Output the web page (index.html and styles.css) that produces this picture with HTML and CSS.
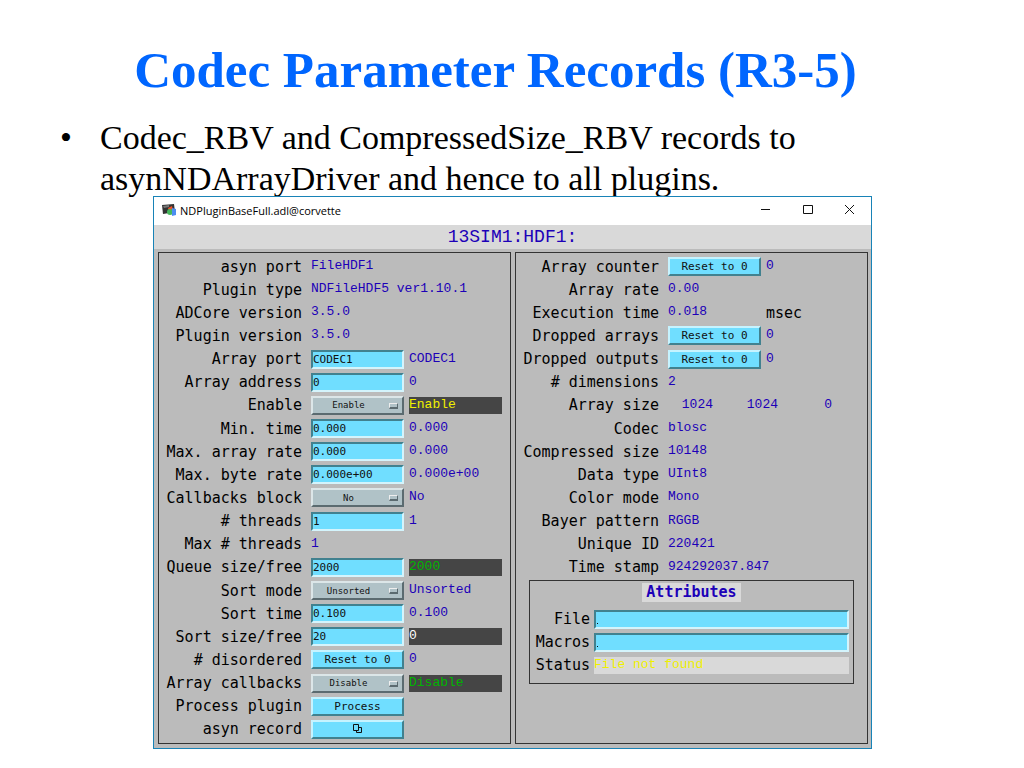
FILE: index.html
```html
<!DOCTYPE html>
<html lang="en">
<head>
  <meta charset="UTF-8">
  <title>Codec Parameter Records (R3-5)</title>
  <link rel="stylesheet" href="styles.css">
</head>
<body>

  <h1>Codec Parameter Records (R3-5)</h1>

  <ul class="points">
    <li>Codec_RBV and CompressedSize_RBV records to asynNDArrayDriver and hence to all plugins.</li>
  </ul>

  <main class="window">
    <header class="titlebar">
      <svg class="app-icon" width="14" height="12" viewBox="0 0 14 12">
        <path d="M0 1l12-1 1 8-12 2z" fill="#333"/>
        <path d="M1 2l6-1v2l-5 1z" fill="#777"/>
        <path d="M6 4l4-2 1 4-4 1z" fill="#e8502c"/>
        <circle cx="8" cy="8" r="3" fill="#45b85c"/>
        <path d="M10 4l4 1v6l-4 1z" fill="#4c8df0"/>
      </svg>
      <span class="window-name">NDPluginBaseFull.adl@corvette</span>
      <button class="win-btn" aria-label="Minimize">
        <svg width="11" height="11" viewBox="0 0 11 11"><path d="M0 4.5h9" stroke="#111"/></svg>
      </button>
      <button class="win-btn" aria-label="Maximize">
        <svg width="11" height="11" viewBox="0 0 11 11"><path d="M.5.5h9v8h-9z" stroke="#111" fill="none"/></svg>
      </button>
      <button class="win-btn" aria-label="Close">
        <svg width="11" height="11" viewBox="0 0 11 11"><path d="M0 0l9 9M9 0l-9 9" stroke="#111"/></svg>
      </button>
    </header>

    <h2 class="prefix">13SIM1:HDF1:</h2>

    <div class="panels">
      <!-- Plugin settings -->
      <section class="panel">
        <div class="row"><span class="label">asyn port</span><output class="wide">FileHDF1</output></div>
        <div class="row"><span class="label">Plugin type</span><output class="wide">NDFileHDF5 ver1.10.1</output></div>
        <div class="row"><span class="label">ADCore version</span><output class="wide">3.5.0</output></div>
        <div class="row"><span class="label">Plugin version</span><output class="wide">3.5.0</output></div>
        <div class="row"><label for="port">Array port</label><input id="port" type="text" value="CODEC1"><output>CODEC1</output></div>
        <div class="row"><label for="address">Array address</label><input id="address" type="text" value="0"><output>0</output></div>
        <div class="row">
          <label for="enable">Enable</label>
          <span class="option"><select id="enable"><option>Enable</option></select></span>
          <output class="dark yellow">Enable</output>
        </div>
        <div class="row"><label for="mintime">Min. time</label><input id="mintime" type="text" value="0.000"><output>0.000</output></div>
        <div class="row"><label for="arrayrate">Max. array rate</label><input id="arrayrate" type="text" value="0.000"><output>0.000</output></div>
        <div class="row"><label for="byterate">Max. byte rate</label><input id="byterate" type="text" value="0.000e+00"><output>0.000e+00</output></div>
        <div class="row">
          <label for="block">Callbacks block</label>
          <span class="option"><select id="block"><option>No</option></select></span>
          <output>No</output>
        </div>
        <div class="row"><label for="threads"># threads</label><input id="threads" type="text" value="1"><output>1</output></div>
        <div class="row"><span class="label">Max # threads</span><output class="wide">1</output></div>
        <div class="row"><label for="queue">Queue size/free</label><input id="queue" type="text" value="2000"><output class="dark green">2000</output></div>
        <div class="row">
          <label for="sortmode">Sort mode</label>
          <span class="option"><select id="sortmode"><option>Unsorted</option></select></span>
          <output>Unsorted</output>
        </div>
        <div class="row"><label for="sorttime">Sort time</label><input id="sorttime" type="text" value="0.100"><output>0.100</output></div>
        <div class="row"><label for="sortsize">Sort size/free</label><input id="sortsize" type="text" value="20"><output class="dark">0</output></div>
        <div class="row"><label for="disordered"># disordered</label><button id="disordered">Reset to 0</button><output>0</output></div>
        <div class="row">
          <label for="callbacks">Array callbacks</label>
          <span class="option"><select id="callbacks"><option>Disable</option></select></span>
          <output class="dark green">Disable</output>
        </div>
        <div class="row"><label for="process">Process plugin</label><button id="process">Process</button></div>
        <div class="row">
          <label for="record">asyn record</label>
          <button id="record">
            <svg width="10" height="10" viewBox="0 0 10 10" fill="none" stroke="#111"><path d="M.5.5h5v6h-5zM5.5 3.5h3v5h-5v-2"/></svg>
          </button>
        </div>
      </section>

      <!-- Array status -->
      <section class="panel">
        <div class="row"><label for="counter">Array counter</label><button id="counter">Reset to 0</button><output>0</output></div>
        <div class="row"><span class="label">Array rate</span><output>0.00</output></div>
        <div class="row"><span class="label">Execution time</span><output>0.018</output><span class="label unit">msec</span></div>
        <div class="row"><label for="droparrays">Dropped arrays</label><button id="droparrays">Reset to 0</button><output>0</output></div>
        <div class="row"><label for="dropoutputs">Dropped outputs</label><button id="dropoutputs">Reset to 0</button><output>0</output></div>
        <div class="row"><span class="label"># dimensions</span><output>2</output></div>
        <div class="row"><span class="label">Array size</span><output class="wide sizes"><span>1024</span><span>1024</span><span>0</span></output></div>
        <div class="row"><span class="label">Codec</span><output>blosc</output></div>
        <div class="row"><span class="label">Compressed size</span><output>10148</output></div>
        <div class="row"><span class="label">Data type</span><output>UInt8</output></div>
        <div class="row"><span class="label">Color mode</span><output>Mono</output></div>
        <div class="row"><span class="label">Bayer pattern</span><output>RGGB</output></div>
        <div class="row"><span class="label">Unique ID</span><output>220421</output></div>
        <div class="row"><span class="label">Time stamp</span><output class="wide">924292037.847</output></div>

        <div class="attributes">
          <h3>Attributes</h3>
          <div class="attr"><label for="file">File</label><input id="file" class="empty" type="text"></div>
          <div class="attr"><label for="macros">Macros</label><input id="macros" class="empty" type="text"></div>
          <div class="attr"><span class="label">Status</span><output class="status">File not found</output></div>
        </div>
      </section>
    </div>
  </main>

</body>
</html>
```
FILE: styles.css
```css
*,
*::after {
  box-sizing: border-box;
}

body {
  display: flex;
  flex-direction: column;
  min-height: 100vh;
  margin: 0;
  padding: 40px 0 19px;
  background: #fff;
  color: #000;
  font-family: "Liberation Serif", serif;
}

h1 {
  margin: 0;
  padding-right: 33px;
  color: #0066ff;
  font-size: 51px;
  line-height: 60px;
  text-align: center;
}

.points {
  margin: 17px 200px 0 60px;
  padding-left: 40px;
  list-style: none;
  font-size: 34px;
  line-height: 41px;
}

.points li::before {
  content: "•";
  float: left;
  margin-left: -40px;
}

/* Window */
.window {
  position: relative;
  display: flex;
  flex: 1;
  flex-direction: column;
  margin: -3px 152px 0 153px;
  border: 1px solid #1883b7;
  background: #bbb;
}

.titlebar {
  display: flex;
  align-items: center;
  height: 28px;
  padding: 0 8px 2px;
  background: #fff;
}

.window-name {
  flex: 1;
  margin-left: 4px;
  font: 11px "Open Sans", sans-serif;
}

.titlebar .win-btn {
  width: 42px;
  height: 26px;
  border: 0;
  background: none;
}

.titlebar .win-btn:last-child {
  margin-right: -8px;
}

.prefix {
  margin: 0;
  background: #d9d9d9;
  color: #1c00b8;
  font: 18px/24px "Liberation Mono", monospace;
  text-align: center;
}

.panels {
  display: grid;
  flex: 1;
  grid-template-columns: 1fr 1fr;
  gap: 4px;
  padding: 3px 3px 4px 4px;
}

.panel {
  display: grid;
  grid-template-rows: repeat(21, 1fr);
  padding: 2px 8px 2px 0;
  border: 1px solid #333;
}

.row {
  display: grid;
  grid-template-columns: 1fr 93px 93px;
  align-items: center;
  column-gap: 5px;
}

label,
.label {
  padding-right: 4px;
  font: 15px/18px "DejaVu Sans Mono", monospace;
  text-align: right;
  white-space: nowrap;
}

.row .unit {
  padding: 0;
  text-align: left;
}

/* Readbacks */
output {
  height: 17px;
  color: #1c00b8;
  font: 13px/16px "Liberation Mono", monospace;
  white-space: nowrap;
}

.wide {
  grid-column: span 2;
}

.dark {
  background: #454545;
  color: #fff;
}

.green {
  color: #00b400;
}

.yellow {
  color: #f0f000;
}

.sizes {
  display: grid;
  grid-template-columns: 45px 65px 54px;
  text-align: right;
}

/* Controls */
input,
select,
button {
  display: block;
  width: 100%;
  height: 19px;
  margin: 0;
  padding: 0;
  border: 2px solid;
  border-radius: 0;
  background: #70deff;
  color: #111;
  font: 11px "DejaVu Sans Mono", monospace;
}

input {
  border-color: #41818f #d4f4fc #d4f4fc #41818f;
}

.empty {
  background: linear-gradient(#111, #111) 1px 11px / 1px 1px no-repeat #70deff;
}

button {
  display: flex;
  align-items: center;
  justify-content: center;
  border-color: #c6f3ff #41818f #41818f #c6f3ff;
}

.option {
  position: relative;
}

select {
  padding-right: 18px;
  border-color: #dce6e8 #5b6b70 #5b6b70 #dce6e8;
  background: #b0c2c7;
  font-size: 9px;
  text-align-last: center;
  appearance: none;
}

.option::after {
  content: "";
  position: absolute;
  top: 7px;
  right: 6px;
  width: 9px;
  height: 6px;
  border: 1px solid;
  border-color: #eee #5b6b70 #5b6b70 #eee;
  border-bottom-width: 2px;
}

/* Attributes box */
.attributes {
  grid-row: 15 / span 5;
  align-self: start;
  height: 104px;
  margin: 1px 5px 0 13px;
  padding: 0 4px;
  border: 1px solid #333;
}

.attributes h3 {
  width: max-content;
  margin: 2px auto 6px;
  padding: 0 4px;
  background: #d9d9d9;
  color: #1c00b8;
  font: bold 15px/19px "DejaVu Sans Mono", monospace;
}

.attr {
  display: grid;
  grid-template-columns: 60px 1fr;
  align-items: center;
  height: 23px;
}

.attributes .status {
  background: #d9d9d9;
  color: #f0f000;
}
```
